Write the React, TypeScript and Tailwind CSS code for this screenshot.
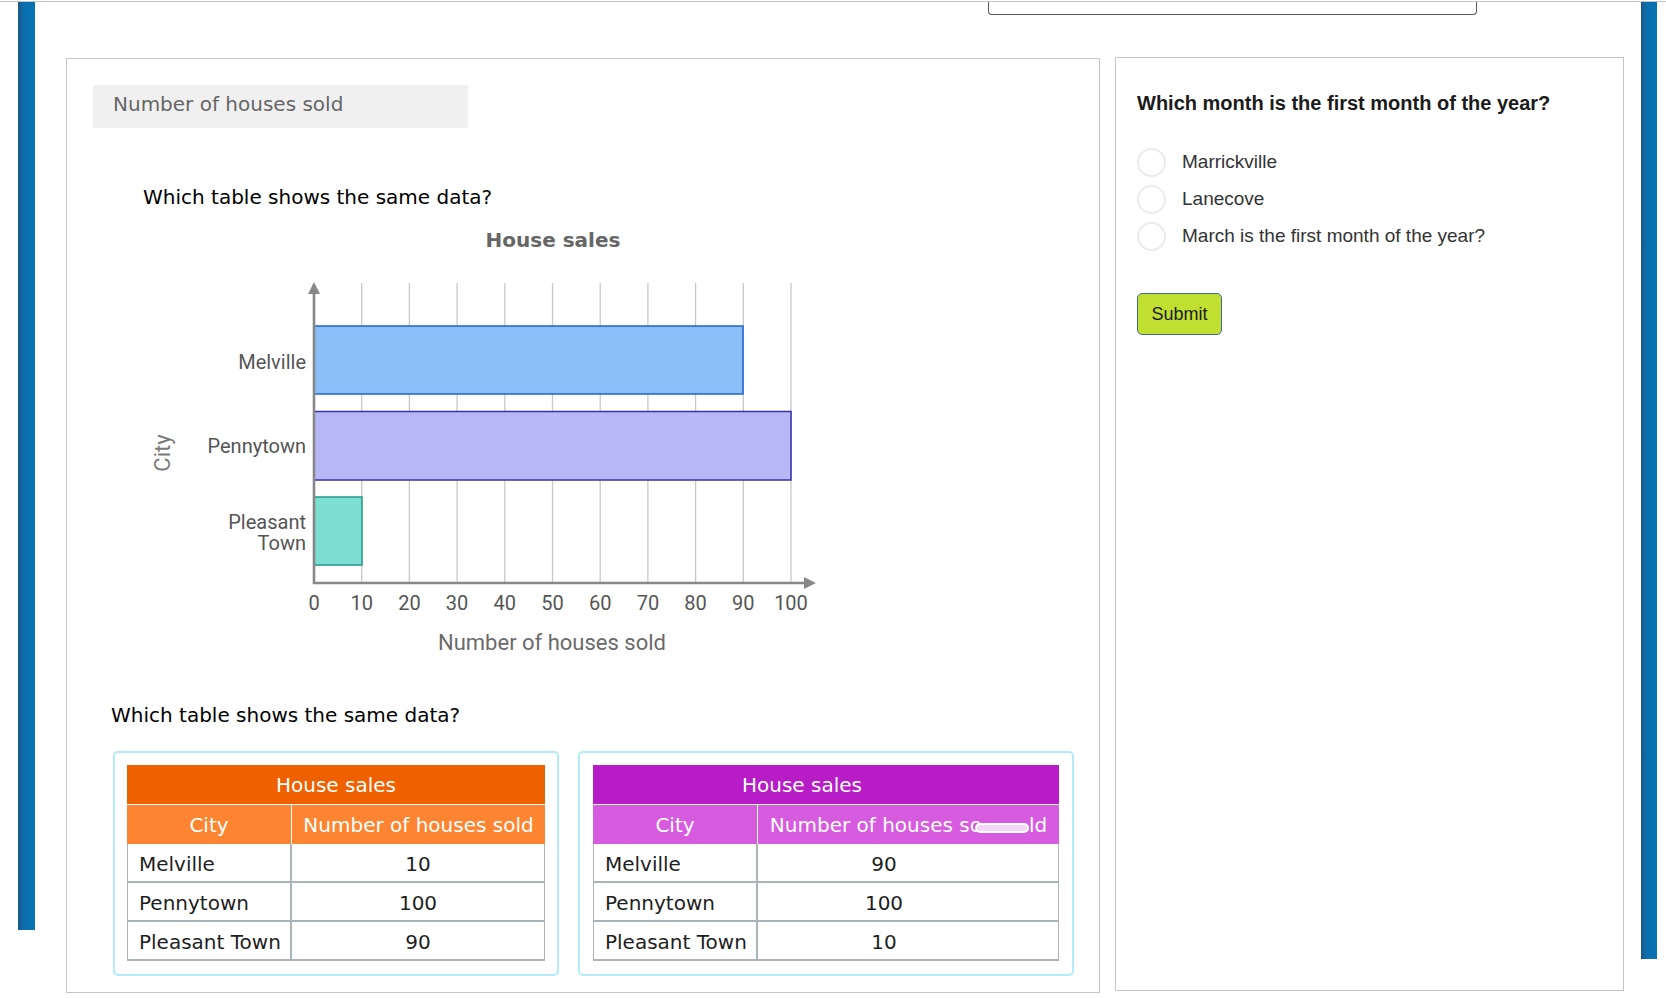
const cities = ["Melville", "Pennytown", "Pleasant Town"];

const dejavu = "font-['DejaVu_Sans','Verdana',sans-serif]";
const arial = "font-['Liberation_Sans','Arial',sans-serif]";

function BarChart() {
  const x0 = 314;
  const step = 47.7;
  const ticks = [0, 10, 20, 30, 40, 50, 60, 70, 80, 90, 100];
  return (
    <svg width={710} height={450} viewBox="130 215 710 450" className="block">
      <text x={553} y={247} textAnchor="middle" fontFamily="DejaVu Sans, Verdana, sans-serif" fontWeight="bold" fontSize={20} fill="#666">
        House sales
      </text>
      {ticks.slice(1).map((t, i) => (
        <line key={t} x1={x0 + step * (i + 1)} x2={x0 + step * (i + 1)} y1={283} y2={583} stroke="#c8c8c8" strokeWidth={1.3} />
      ))}
      <rect x={314} y={326} width={429} height={68} fill="#8bbff7" stroke="#1a63d8" strokeWidth={1.5} />
      <rect x={314} y={411.5} width={477} height={68.5} fill="#b9b8f7" stroke="#3331a8" strokeWidth={1.5} />
      <rect x={314} y={497} width={48} height={68} fill="#7ddfd2" stroke="#22978a" strokeWidth={1.5} />
      <line x1={314} x2={314} y1={292} y2={584} stroke="#888" strokeWidth={2.6} />
      <polygon points="314,282 308,294 320,294" fill="#888" />
      <line x1={313} x2={806} y1={583} y2={583} stroke="#888" strokeWidth={2.6} />
      <polygon points="816,583 804,577 804,589" fill="#888" />
      <g fontFamily="Roboto, sans-serif" fontSize={20} fill="#555">
        <text x={306} y={369} textAnchor="end">Melville</text>
        <text x={306} y={453} textAnchor="end">Pennytown</text>
        <text x={306} y={529} textAnchor="end">Pleasant</text>
        <text x={306} y={550} textAnchor="end">Town</text>
        {ticks.map((t, i) => (
          <text key={t} x={x0 + step * i} y={610} textAnchor="middle">
            {t}
          </text>
        ))}
      </g>
      <text x={552} y={650} textAnchor="middle" fontFamily="Roboto, sans-serif" fontSize={22} fill="#6a6a6a">
        Number of houses sold
      </text>
      <text transform="translate(170,453) rotate(-90)" textAnchor="middle" fontFamily="Roboto, sans-serif" fontSize={22} fill="#7a7a7a">
        City
      </text>
    </svg>
  );
}

type TableProps = {
  width: string;
  titleBg: string;
  headBg: string;
  values: number[];
  valuePad: string;
  glitch?: boolean;
};

function SalesTable({ width, titleBg, headBg, values, valuePad, glitch }: TableProps) {
  return (
    <div className={`${width} ${dejavu} text-[20px] leading-[24px]`}>
      <div className={`h-[39px] ${titleBg} flex items-center justify-center text-white ${valuePad}`}>House sales</div>
      <div className={`flex h-[40px] border-t border-white ${headBg} text-white`}>
        <div className="w-[165px] border-r border-white flex items-center justify-center">City</div>
        <div className="flex-1 flex items-center justify-center">
          {glitch ? (
            <>
              <span>Number of houses so</span>
              <span className="-ml-[7px] mt-[6px] inline-block w-[54px] h-[10px] rounded-full border-2 border-white bg-[#f4d6f6]" />
              <span>ld</span>
            </>
          ) : (
            "Number of houses sold"
          )}
        </div>
      </div>
      <div className="border-x border-[#a9b3b8] text-[#1e1e1e]">
        {cities.map((c, i) => (
          <div key={c} className="flex h-[39px] border-b-2 border-[#a9b3b8]">
            <div className="w-[164px] border-r-2 border-[#a9b3b8] pl-[11px] pt-[2px] flex items-center">{c}</div>
            <div className={`flex-1 flex items-center justify-center pt-[2px] ${valuePad}`}>{values[i]}</div>
          </div>
        ))}
      </div>
    </div>
  );
}

export default function App() {
  return (
    <div className="w-[1666px] h-[998px] bg-white overflow-hidden">
      <div className="h-[2px] border-b border-[#c4c4c4]" />
      <div className="flex">
        <div className="ml-[18px] w-[17px] h-[928px] bg-[linear-gradient(to_right,#1c5985,#0a6faf_35%,#0774b5)]" />

        <div className="w-[1606px]">
          <div className="ml-[953px] w-[489px] h-[13px] border-x border-b border-[#555] rounded-b-[4px]" />

          <div className="flex items-start mt-[42px]">
            {/* left question panel */}
            <div className={`ml-[31px] mt-[1px] w-[1034px] h-[935px] border border-[#c6c6c6] ${dejavu}`}>
              <div className="ml-[26px] mt-[26px] w-[375px] h-[43px] bg-[#f0f0f0] pl-[20px] pt-[7px] text-[20px] leading-[24px] text-[#666]">
                Number of houses sold
              </div>
              <p className="mt-[57px] pl-[76px] text-[20px] leading-[24px] text-black">Which table shows the same data?</p>
              <div className="ml-[63px] mt-[6px]">
                <BarChart />
              </div>
              <p className="mt-[38px] pl-[44px] text-[20px] leading-[24px] text-black">Which table shows the same data?</p>
              <div className="flex gap-[19px] ml-[46px] mt-[24px]">
                <div className="border-2 border-[#b3ebfb] rounded-[5px] px-[12px] pt-[12px] pb-[13px]">
                  <SalesTable width="w-[418px]" titleBg="bg-[#ef6100]" headBg="bg-[#fd8531]" values={[10, 100, 90]} valuePad="" />
                </div>
                <div className="border-2 border-[#b3ebfb] rounded-[5px] px-[13px] pt-[12px] pb-[13px]">
                  <SalesTable
                    width="w-[466px]"
                    titleBg="bg-[#b81cc6]"
                    headBg="bg-[#d75bdf]"
                    values={[90, 100, 10]}
                    valuePad="pr-[48px]"
                    glitch
                  />
                </div>
              </div>
            </div>

            {/* right quiz panel */}
            <div className={`ml-[15px] w-[509px] h-[934px] border border-[#c6c6c6] ${arial}`}>
              <h2 className="mt-[33px] pl-[21px] text-[20px] leading-[24px] font-bold text-[#1b1b1b]">
                Which month is the first month of the year?
              </h2>
              <div className="mt-[29px] pl-[21px]">
                {["Marrickville", "Lanecove", "March is the first month of the year?"].map((o) => (
                  <label key={o} className="flex items-center h-[37px] text-[19px] text-[#333]">
                    <span className="w-[29px] h-[29px] rounded-full border-2 border-[#ebebeb] bg-white shrink-0" />
                    <span className="ml-[16px]">{o}</span>
                  </label>
                ))}
              </div>
              <button className="ml-[21px] mt-[38px] w-[85px] h-[42px] rounded-[5px] border border-[#3e6b9a] bg-[#c0df31] text-[18px] text-[#1a1a1a]">
                Submit
              </button>
            </div>
          </div>
        </div>

        <div className="w-[16px] h-[957px] bg-[linear-gradient(to_right,#1c5985,#0a6faf_35%,#0774b5)]" />
      </div>
    </div>
  );
}
